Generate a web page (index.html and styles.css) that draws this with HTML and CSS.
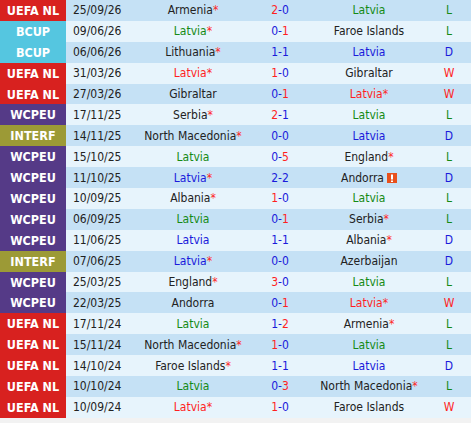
FILE: index.html
```html
<!DOCTYPE html>
<html>
<head>
<meta charset="utf-8">
<link rel="stylesheet" href="styles.css">
</head>
<body>
<div class="table">
  <div class="row dark"><div class="comp nl">UEFA NL</div><div class="date">25/09/26</div><div class="home">Armenia<span class="ast">*</span></div><div class="score"><span class="r">2</span>-<span class="b">0</span></div><div class="away green">Latvia</div><div class="res green">L</div></div>
  <div class="row light"><div class="comp bcup">BCUP</div><div class="date">09/06/26</div><div class="home green">Latvia<span class="ast">*</span></div><div class="score"><span class="b">0</span>-<span class="r">1</span></div><div class="away">Faroe Islands</div><div class="res green">L</div></div>
  <div class="row dark"><div class="comp bcup">BCUP</div><div class="date">06/06/26</div><div class="home">Lithuania<span class="ast">*</span></div><div class="score"><span class="b">1-1</span></div><div class="away blue">Latvia</div><div class="res blue">D</div></div>
  <div class="row light"><div class="comp nl">UEFA NL</div><div class="date">31/03/26</div><div class="home red">Latvia<span class="ast">*</span></div><div class="score"><span class="r">1</span>-<span class="b">0</span></div><div class="away">Gibraltar</div><div class="res red">W</div></div>
  <div class="row dark"><div class="comp nl">UEFA NL</div><div class="date">27/03/26</div><div class="home">Gibraltar</div><div class="score"><span class="b">0</span>-<span class="r">1</span></div><div class="away red">Latvia<span class="ast">*</span></div><div class="res red">W</div></div>
  <div class="row light"><div class="comp wc">WCPEU</div><div class="date">17/11/25</div><div class="home">Serbia<span class="ast">*</span></div><div class="score"><span class="r">2</span>-<span class="b">1</span></div><div class="away green">Latvia</div><div class="res green">L</div></div>
  <div class="row dark"><div class="comp intf">INTERF</div><div class="date">14/11/25</div><div class="home">North Macedonia<span class="ast">*</span></div><div class="score"><span class="b">0-0</span></div><div class="away blue">Latvia</div><div class="res blue">D</div></div>
  <div class="row light"><div class="comp wc">WCPEU</div><div class="date">15/10/25</div><div class="home green">Latvia</div><div class="score"><span class="b">0</span>-<span class="r">5</span></div><div class="away">England<span class="ast">*</span></div><div class="res green">L</div></div>
  <div class="row dark"><div class="comp wc">WCPEU</div><div class="date">11/10/25</div><div class="home blue">Latvia<span class="ast">*</span></div><div class="score"><span class="b">2-2</span></div><div class="away">Andorra <svg class="card" width="10" height="10" viewBox="0 0 10 10"><rect x="0" y="0" width="10" height="10" fill="#e8501c"/><rect x="4" y="1.5" width="2" height="5" fill="#fff"/><rect x="4" y="7.5" width="2" height="1.5" fill="#fff"/></svg></div><div class="res blue">D</div></div>
  <div class="row light"><div class="comp wc">WCPEU</div><div class="date">10/09/25</div><div class="home">Albania<span class="ast">*</span></div><div class="score"><span class="r">1</span>-<span class="b">0</span></div><div class="away green">Latvia</div><div class="res green">L</div></div>
  <div class="row dark"><div class="comp wc">WCPEU</div><div class="date">06/09/25</div><div class="home green">Latvia</div><div class="score"><span class="b">0</span>-<span class="r">1</span></div><div class="away">Serbia<span class="ast">*</span></div><div class="res green">L</div></div>
  <div class="row light"><div class="comp wc">WCPEU</div><div class="date">11/06/25</div><div class="home blue">Latvia</div><div class="score"><span class="b">1-1</span></div><div class="away">Albania<span class="ast">*</span></div><div class="res blue">D</div></div>
  <div class="row dark"><div class="comp intf">INTERF</div><div class="date">07/06/25</div><div class="home blue">Latvia<span class="ast">*</span></div><div class="score"><span class="b">0-0</span></div><div class="away">Azerbaijan</div><div class="res blue">D</div></div>
  <div class="row light"><div class="comp wc">WCPEU</div><div class="date">25/03/25</div><div class="home">England<span class="ast">*</span></div><div class="score"><span class="r">3</span>-<span class="b">0</span></div><div class="away green">Latvia</div><div class="res green">L</div></div>
  <div class="row dark"><div class="comp wc">WCPEU</div><div class="date">22/03/25</div><div class="home">Andorra</div><div class="score"><span class="b">0</span>-<span class="r">1</span></div><div class="away red">Latvia<span class="ast">*</span></div><div class="res red">W</div></div>
  <div class="row light"><div class="comp nl">UEFA NL</div><div class="date">17/11/24</div><div class="home green">Latvia</div><div class="score"><span class="b">1</span>-<span class="r">2</span></div><div class="away">Armenia<span class="ast">*</span></div><div class="res green">L</div></div>
  <div class="row dark"><div class="comp nl">UEFA NL</div><div class="date">15/11/24</div><div class="home">North Macedonia<span class="ast">*</span></div><div class="score"><span class="r">1</span>-<span class="b">0</span></div><div class="away green">Latvia</div><div class="res green">L</div></div>
  <div class="row light"><div class="comp nl">UEFA NL</div><div class="date">14/10/24</div><div class="home">Faroe Islands<span class="ast">*</span></div><div class="score"><span class="b">1-1</span></div><div class="away blue">Latvia</div><div class="res blue">D</div></div>
  <div class="row dark"><div class="comp nl">UEFA NL</div><div class="date">10/10/24</div><div class="home green">Latvia</div><div class="score"><span class="b">0</span>-<span class="r">3</span></div><div class="away">North Macedonia<span class="ast">*</span></div><div class="res green">L</div></div>
  <div class="row light"><div class="comp nl">UEFA NL</div><div class="date">10/09/24</div><div class="home red">Latvia<span class="ast">*</span></div><div class="score"><span class="r">1</span>-<span class="b">0</span></div><div class="away">Faroe Islands</div><div class="res red">W</div></div>
</div>
</body>
</html>
```
FILE: styles.css
```css
html, body {
  margin: 0;
  padding: 0;
  background: #f2f2f2;
}
body {
  width: 471px;
  height: 423px;
  overflow: hidden;
  font-family: "DejaVu Sans Condensed", "DejaVu Sans", sans-serif;
  font-size: 12px;
  color: #222;
}
.table {
  display: flex;
  flex-direction: column;
}
.row {
  display: grid;
  grid-template-columns: 66px 59px 136px 38px 140px 20px 12px;
  height: 20.9px;
  align-items: center;
}
.row > div {
  height: 100%;
  display: flex;
  align-items: center;
  justify-content: center;
  white-space: nowrap;
}
.dark { background: #c5e1f5; }
.light { background: #e7f4fc; }
.comp {
  color: #fff;
  font-weight: bold;
  font-size: 12.5px;
}
.nl { background: #d8211f; }
.bcup { background: #55c6e0; }
.wc { background: #553a87; }
.intf { background: #9c9a36; }
.date { justify-content: flex-start !important; padding-left: 7px; }
.green { color: #158a15; }
.red { color: #ff1f1f; }
.blue { color: #1a1adb; }
.score { color: #1a1adb; }
.score .r { color: #ff1f1f; }
.score .b { color: #1a1adb; }
.ast { color: #ff1f1f; }
.card { margin-left: 3px; }
```
